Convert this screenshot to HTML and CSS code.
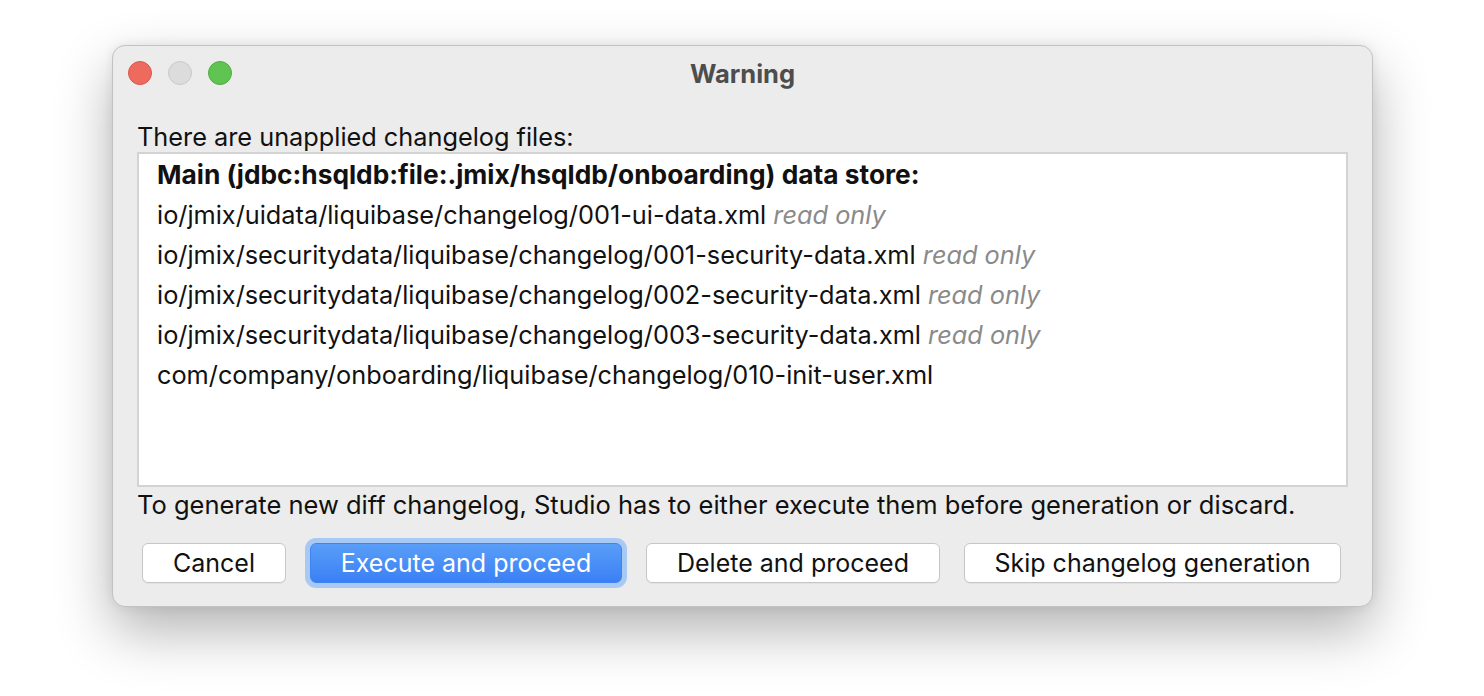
FILE: index.html
```html
<!DOCTYPE html>
<html>
<head>
<meta charset="utf-8">
<link rel="stylesheet" href="styles.css">
</head>
<body>
<div class="window">
  <div class="titlebar">
    <div class="lights">
      <span class="light red"></span>
      <span class="light gray"></span>
      <span class="light green"></span>
    </div>
    <div class="title">Warning</div>
  </div>
  <div class="content">
    <div class="label">There are unapplied changelog files:</div>
    <div class="list">
      <div class="row bold">Main (jdbc:hsqldb:file:.jmix/hsqldb/onboarding) data store:</div>
      <div class="row">io/jmix/uidata/liquibase/changelog/001-ui-data.xml <span class="ro">read only</span></div>
      <div class="row">io/jmix/securitydata/liquibase/changelog/001-security-data.xml <span class="ro">read only</span></div>
      <div class="row">io/jmix/securitydata/liquibase/changelog/002-security-data.xml <span class="ro">read only</span></div>
      <div class="row">io/jmix/securitydata/liquibase/changelog/003-security-data.xml <span class="ro">read only</span></div>
      <div class="row">com/company/onboarding/liquibase/changelog/010-init-user.xml</div>
    </div>
    <div class="label note">To generate new diff changelog, Studio has to either execute them before generation or discard.</div>
    <div class="buttons">
      <button class="btn btn-cancel">Cancel</button>
      <button class="btn btn-primary">Execute and proceed</button>
      <button class="btn btn-delete">Delete and proceed</button>
      <button class="btn btn-skip">Skip changelog generation</button>
    </div>
  </div>
</div>
</body>
</html>
```
FILE: styles.css
```css
html, body {
  margin: 0;
  padding: 0;
  background: #ffffff;
  height: 100%;
}
body {
  box-sizing: border-box;
  padding: 45px 0 0 112px;
  font-family: "Inter", "Noto Sans", "Liberation Sans", sans-serif;
  color: #111;
  overflow: hidden;
}
.window {
  box-sizing: border-box;
  width: 1261px;
  height: 562px;
  background: #ececec;
  border: 1px solid #c2c2c2;
  border-radius: 13px;
  box-shadow: 0 24px 56px rgba(0,0,0,0.30), 0 0 12px rgba(0,0,0,0.08);
  display: flex;
  flex-direction: column;
}
.titlebar {
  position: relative;
  height: 54px;
  display: flex;
  align-items: center;
  justify-content: center;
}
.lights {
  position: absolute;
  left: 15px;
  top: 15px;
  display: flex;
  gap: 16px;
}
.light {
  box-sizing: border-box;
  width: 24px;
  height: 24px;
  border-radius: 50%;
}
.red { background: #ee6a5f; border: 1px solid #d9584d; }
.gray { background: #dcdcdc; border: 1px solid #c9c9c9; }
.green { background: #5fc452; border: 1px solid #4dae40; }
.title {
  font-size: 25.5px;
  font-weight: 700;
  color: #4d4d4d;
}
.content {
  padding: 22px 24px 0 24px;
  display: flex;
  flex-direction: column;
}
.label {
  font-size: 25.3px;
  line-height: 30px;
  height: 30px;
  white-space: nowrap;
}
.list {
  box-sizing: border-box;
  height: 335px;
  background: #fff;
  border: 2px solid #d3d3d3;
  padding: 1px 0 0 18px;
}
.row {
  font-size: 25.3px;
  line-height: 40px;
  height: 40px;
  white-space: nowrap;
}
.bold { font-weight: 700; font-size: 26.3px; }
.ro {
  font-style: italic;
  color: #8a8a8a;
}
.note {
  margin-top: 3px;
  font-size: 25.5px;
}
.buttons {
  margin-top: 23px;
  padding: 0 5px;
  display: flex;
  gap: 24px;
}
.btn {
  box-sizing: border-box;
  height: 40px;
  font-family: inherit;
  font-size: 25px;
  color: #111;
  background: #fff;
  border: 1px solid #c6c6c6;
  border-radius: 6px;
  padding: 0;
  box-shadow: 0 1px 0 rgba(0,0,0,0.04);
}
.btn-cancel { width: 144px; }
.btn-primary {
  width: 312px;
  color: #fff;
  border: 1px solid #3d84f0;
  background: linear-gradient(#5a9ef8, #3a80f5);
  box-shadow: 0 0 0 5px #a9c9f5;
}
.btn-delete { width: 294px; }
.btn-skip { width: 377px; }
```
